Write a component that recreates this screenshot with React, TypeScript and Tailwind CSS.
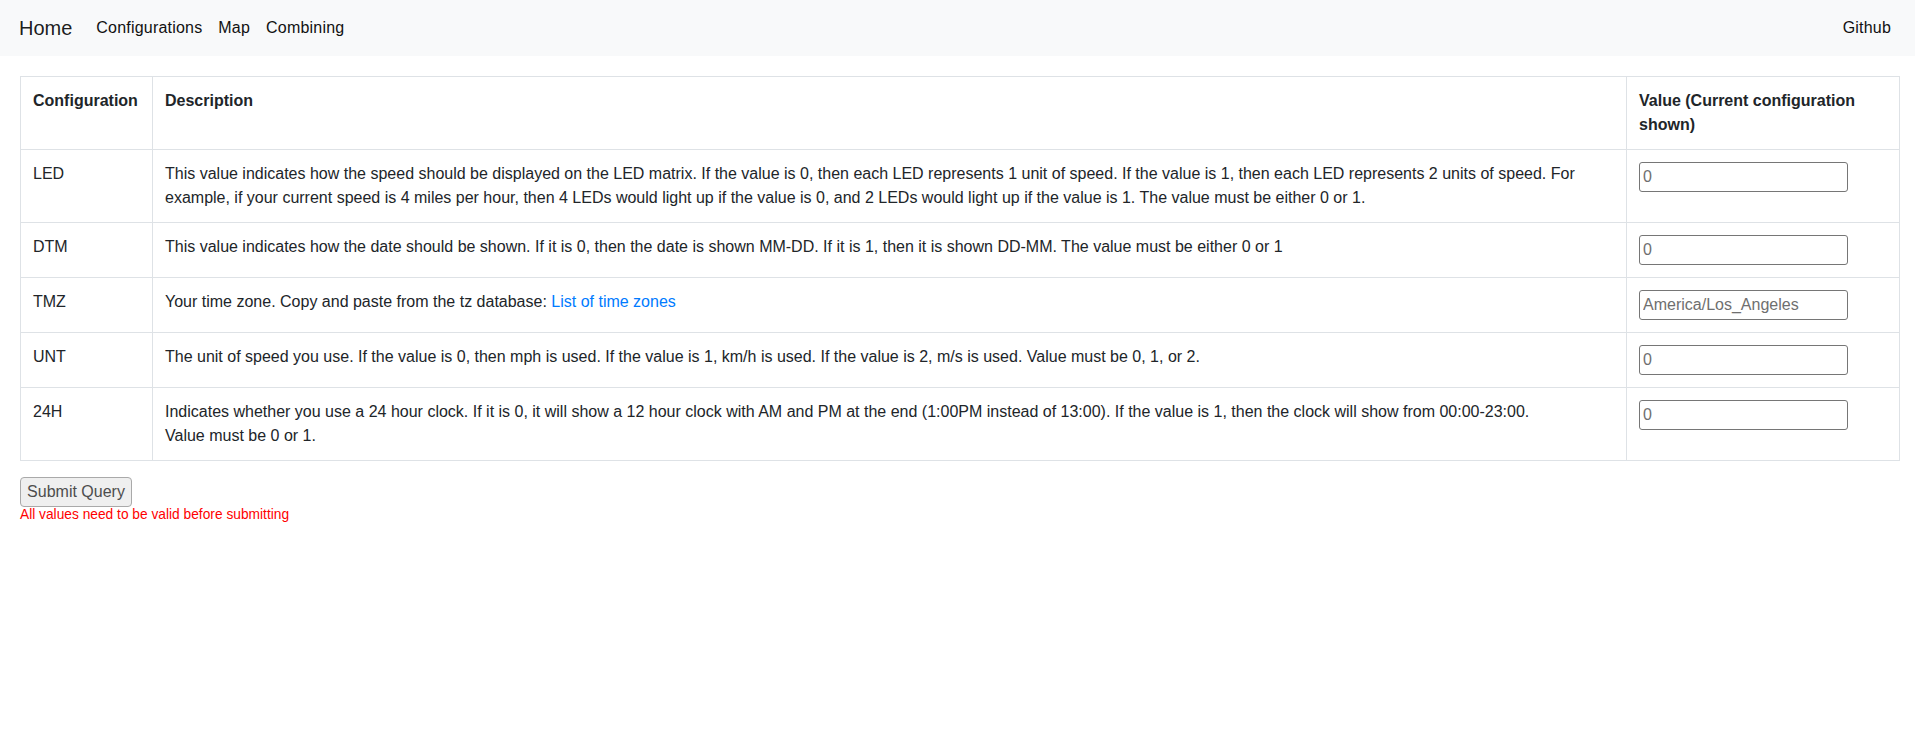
import React from "react";

type Row = { key: string; desc: React.ReactNode; value: string };

const rows: Row[] = [
  {
    key: "LED",
    desc: "This value indicates how the speed should be displayed on the LED matrix. If the value is 0, then each LED represents 1 unit of speed. If the value is 1, then each LED represents 2 units of speed. For example, if your current speed is 4 miles per hour, then 4 LEDs would light up if the value is 0, and 2 LEDs would light up if the value is 1. The value must be either 0 or 1.",
    value: "0",
  },
  {
    key: "DTM",
    desc: "This value indicates how the date should be shown. If it is 0, then the date is shown MM-DD. If it is 1, then it is shown DD-MM. The value must be either 0 or 1",
    value: "0",
  },
  {
    key: "TMZ",
    desc: (
      <>
        Your time zone. Copy and paste from the tz database:{" "}
        <a href="#" className="text-[#007bff]">
          List of time zones
        </a>
      </>
    ),
    value: "America/Los_Angeles",
  },
  {
    key: "UNT",
    desc: "The unit of speed you use. If the value is 0, then mph is used. If the value is 1, km/h is used. If the value is 2, m/s is used. Value must be 0, 1, or 2.",
    value: "0",
  },
  {
    key: "24H",
    desc: (
      <>
        Indicates whether you use a 24 hour clock. If it is 0, it will show a 12 hour clock with AM and PM at the end
        (1:00PM instead of 13:00). If the value is 1, then the clock will show from 00:00-23:00.
        <br />
        Value must be 0 or 1.
      </>
    ),
    value: "0",
  },
];

function Navbar() {
  const link = "px-2 text-base leading-6 text-[#111] tracking-[0.2px]";
  return (
    <nav className="h-14 bg-[#f8f9fa] flex items-center pl-[19px] pr-4">
      <a href="#" className="text-xl leading-[30px] text-black/90 mr-4">
        Home
      </a>
      <a href="#" className={link}>Configurations</a>
      <a href="#" className={link}>Map</a>
      <a href="#" className={link}>Combining</a>
      <a href="#" className={"ml-auto " + link}>Github</a>
    </nav>
  );
}

export default function App() {
  return (
    <div className="min-h-screen bg-white font-['Liberation_Sans',Arial,sans-serif] text-[#212529]">
      <Navbar />
      <main className="pt-5 pl-5 pr-[15px]">
        <table className="w-full table-fixed border-collapse text-base leading-6">
          <thead>
            <tr>
              <th className="w-[132px] border border-[#dee2e6] p-3 text-left align-top font-bold">Configuration</th>
              <th className="border border-[#dee2e6] p-3 text-left align-top font-bold">Description</th>
              <th className="w-[273px] border border-[#dee2e6] p-3 text-left align-top font-bold">
                Value (Current configuration shown)
              </th>
            </tr>
          </thead>
          <tbody>
            {rows.map((r) => (
              <tr key={r.key}>
                <td className="border border-[#dee2e6] p-3 align-top">{r.key}</td>
                <td className="border border-[#dee2e6] p-3 align-top">{r.desc}</td>
                <td className="border border-[#dee2e6] p-3 align-top">
                  <input
                    type="text"
                    placeholder={r.value}
                    className="block w-[209px] h-[30px] border border-[#767676] rounded-[3px] px-[3px] text-base text-[#212529] placeholder:text-[#6f6f6f] bg-white"
                  />
                </td>
              </tr>
            ))}
          </tbody>
        </table>
        <button className="mt-4 h-[30px] w-[112px] border border-[#a9a9a9] rounded-[4px] bg-[#efefef] text-[#4d4d4d] text-base leading-5">
          Submit Query
        </button>
        <p className="text-[13.75px] leading-4 text-[#ff0000]">All values need to be valid before submitting</p>
      </main>
    </div>
  );
}
